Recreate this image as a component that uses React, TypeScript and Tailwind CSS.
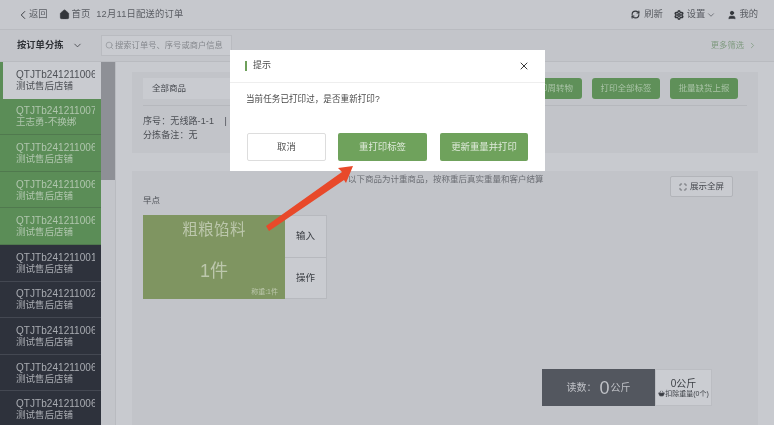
import { ChevronLeft, ChevronDown, ChevronRight, Home, RefreshCw, Settings, User, Search, X, Maximize, ShoppingBasket } from "lucide-react";

const items = [
  { id: "QTJTb241211006", name: "测试售后店铺", s: "active" },
  { id: "QTJTb241211007", name: "王志勇-不换绑", s: "green" },
  { id: "QTJTb241211006", name: "测试售后店铺", s: "green" },
  { id: "QTJTb241211006", name: "测试售后店铺", s: "green" },
  { id: "QTJTb241211006", name: "测试售后店铺", s: "green" },
  { id: "QTJTb241211001", name: "测试售后店铺", s: "dark" },
  { id: "QTJTb241211002", name: "测试售后店铺", s: "dark" },
  { id: "QTJTb241211006", name: "测试售后店铺", s: "dark" },
  { id: "QTJTb241211006", name: "测试售后店铺", s: "dark" },
  { id: "QTJTb241211006", name: "测试售后店铺", s: "dark" },
];

function SideItem({ id, name, s }: { id: string; name: string; s: string }) {
  const cls =
    s === "active"
      ? "bg-[#c9cbd0] text-[#4d5056] border-l-[3px] border-[#5b8d57] pl-[13px]"
      : s === "green"
        ? "bg-[#5b8d57] text-[#b0c6ae] border-b border-[#50794e] pl-[16px]"
        : "bg-[#2e323c] text-[#a9acb2] border-b border-[#444852] pl-[16px]";
  return (
    <div className={`h-[36.6px] shrink-0 flex flex-col justify-center overflow-hidden pr-[6px] ${cls}`}>
      <div className="text-[10px] leading-[11px] tracking-[0.05px] whitespace-nowrap overflow-hidden">{id}</div>
      <div className="text-[9.5px] leading-[11px] whitespace-nowrap">{name}</div>
    </div>
  );
}

function GreenBtn({ children, align = "justify-center" }: { children: string; align?: string }) {
  return (
    <div className={`h-[21px] w-[68px] shrink-0 rounded-[3px] bg-[#5f9059] text-[#a9c3a6] text-[8.5px] flex items-center ${align}`}>
      {children}
    </div>
  );
}

export default function App() {
  return (
    <div
      className="relative w-[774px] h-[425px] overflow-hidden bg-[#c5c7cc] text-[#44474d] flex flex-col blur-[0.35px]"
      style={{ fontFamily: '"Liberation Sans", "Noto Sans CJK SC", sans-serif' }}
    >
      {/* top bar */}
      <div className="h-[29px] shrink-0 flex items-center pl-[17px] pr-[16px] text-[9.3px] text-[#5a5d63] bg-[#c6c8cd]">
        <ChevronLeft size={14} strokeWidth={1.6} className="-ml-[1px] text-[#33363b]" />
        <span className="ml-[-1px]">返回</span>
        <Home size={11} fill="#33363b" strokeWidth={1.5} className="ml-[11px] text-[#33363b]" />
        <span className="ml-[2px]">首页</span>
        <span className="ml-[6px] tracking-[0.2px]">12月11日配送的订单</span>
        <div className="ml-auto flex items-center">
          <RefreshCw size={9} strokeWidth={3} className="text-[#33363b]" />
          <span className="ml-[4px]">刷新</span>
          <Settings size={10} strokeWidth={3.5} className="ml-[11px] text-[#33363b]" />
          <span className="ml-[3px]">设置</span>
          <ChevronDown size={10} strokeWidth={1.8} className="ml-[1px]" />
          <User size={10} fill="#33363b" className="ml-[11px] text-[#33363b]" />
          <span className="ml-[2px]">我的</span>
        </div>
      </div>

      {/* filter row */}
      <div className="h-[33px] shrink-0 flex items-center bg-[#c3c5ca] border-y border-[#b9bbc0]">
        <div className="w-[101px] flex items-center pl-[17px] font-bold text-[9.3px] text-[#2f3237]">
          按订单分拣
          <ChevronDown size={11} strokeWidth={1.6} className="ml-[8px]" />
        </div>
        <div className="h-[21px] w-[131px] flex items-center pl-[3px] bg-[#c9cbd0] border border-[#b9bbc0] text-[8.3px] text-[#85888d] whitespace-nowrap">
          <Search size={9} strokeWidth={1.6} className="shrink-0 mr-px" />
          搜索订单号、序号或商户信息
        </div>
        <div className="ml-auto mr-[17px] flex items-center text-[8.3px] text-[#7f9a7f]">
          更多筛选
          <ChevronRight size={9} strokeWidth={2} className="ml-[4px]" />
        </div>
      </div>

      <div className="flex-1 flex min-h-0">
        {/* sidebar */}
        <div className="w-[101px] shrink-0 flex flex-col overflow-hidden">
          {items.map((it, i) => (
            <SideItem key={i} {...it} />
          ))}
        </div>
        {/* scroll track */}
        <div className="w-[15px] shrink-0 bg-[#c3c5ca] border-r border-[#b9bbc0]">
          <div className="h-[118px] bg-[#8e9096]" />
        </div>

        {/* main */}
        <div className="flex-1 min-w-0 pt-[10px] pl-[16px] pr-[16px] flex flex-col gap-[18px] bg-[#c8cacf]">
          <div className="h-[81px] shrink-0 bg-[#c2c4c9] px-[11px] pt-[6px]">
            <div className="flex gap-[12px] border-b border-[#b6b8bd] pb-[6px]">
              <div className="w-[100px] h-[21px] flex items-center pl-[9px] text-[8.5px] bg-[#c9cbd0] shrink-0">全部商品</div>
              <div className="ml-auto flex gap-[10px] pr-[9px]">
                <GreenBtn align="justify-end pr-[9px]">打印周转物</GreenBtn>
                <GreenBtn>打印全部标签</GreenBtn>
                <GreenBtn>批量缺货上报</GreenBtn>
              </div>
            </div>
            <div className="mt-[8px] text-[9px] leading-[14px] text-[#4b4e54] tracking-[0.1px]">
              <div>序号：无线路-1-1&nbsp;&nbsp;&nbsp;&nbsp;|</div>
              <div>分拣备注：无</div>
            </div>
          </div>

          <div className="flex-1 bg-[#c2c4c9] px-[11px] pt-[5px] relative flex flex-col">
            <div className="flex justify-end h-[21px] pr-[14px]">
              <div className="w-[63px] h-[21px] bg-[#c9cbd0] border border-[#b2b4b9] rounded-[2px] text-[8.5px] flex items-center justify-center gap-[3px]">
                <Maximize size={8} />
                展示全屏
              </div>
            </div>
            <div className="text-[8.5px] mt-[-3px] leading-[12px] text-[#4b4e54]">早点</div>
            <div className="mt-[9px] flex h-[84px] w-[184px]">
              <div className="w-[142px] bg-[#7f9561] text-[#bcc7ac] flex flex-col items-center relative">
                <div className="text-[15.5px] leading-[18px] mt-[6px] tracking-[0.4px]">粗粮馅料</div>
                <div className="text-[18px] leading-[20px] mt-[22px]">1件</div>
                <div className="absolute right-[7px] bottom-[3px] text-[7px] leading-[9px]">称重:1件</div>
              </div>
              <div className="flex-1 flex flex-col text-[9.5px] text-[#3d4046]">
                <div className="flex-1 flex items-center justify-center bg-[#c9cbd0] border-b border-r border-t border-[#b7b9be]">输入</div>
                <div className="flex-1 flex items-center justify-center bg-[#c9cbd0] border-b border-r border-[#b7b9be]">操作</div>
              </div>
            </div>
            <div className="mt-auto mb-[19px] ml-auto mr-[35px] flex h-[37px]">
              <div className="w-[113px] bg-[#53575f] text-[#bfc1c6] text-[10px] flex items-center justify-center">
                读数：<span className="text-[18px] leading-[20px] ml-[3px] mr-px">0</span>公斤
              </div>
              <div className="w-[57px] bg-[#cbcdd2] border border-[#bbbdc2] flex flex-col items-center justify-center text-[#3d4046]">
                <div className="text-[10px] leading-[11px]">0公斤</div>
                <div className="flex items-center text-[7px] leading-[9px] whitespace-nowrap">
                  <ShoppingBasket size={7} fill="#33363b" />
                  扣除重量(0个)
                </div>
              </div>
            </div>
          </div>
        </div>
      </div>

      {/* note */}
      <div className="absolute left-[348px] top-[174px] text-[8.5px] leading-[11px] text-[#6b6e74]">
        以下商品为计重商品，按称重后真实重量和客户结算
      </div>

      {/* modal */}
      <div className="absolute left-[230px] top-[50px] w-[315px] h-[121px] bg-white flex flex-col text-[#4a4a4a]">
        <div className="h-[33px] shrink-0 flex items-center border-b border-[#eeeeee] pl-[15px] pr-[15px]">
          <div className="w-[2px] h-[10px] bg-[#6ea05b] mr-[6px]" />
          <span className="text-[9px]">提示</span>
          <X size={12} strokeWidth={1.8} className="ml-auto text-[#222]" />
        </div>
        <div className="pl-[16px] pt-[9px] text-[8.6px] leading-[14px]">当前任务已打印过，是否重新打印?</div>
        <div className="mt-auto mb-[10px] px-[17px] flex justify-between text-[9.4px]">
          <div className="w-[79px] h-[28px] flex items-center justify-center rounded-[2px] border border-[#dddddd] text-[#555]">取消</div>
          <div className="w-[89px] h-[28px] ml-[12px] flex items-center justify-center rounded-[2px] bg-[#6fa25c] text-[#dfeada]">重打印标签</div>
          <div className="w-[88px] h-[28px] ml-[13px] flex items-center justify-center rounded-[2px] bg-[#6fa25c] text-[#dfeada]">更新重量并打印</div>
        </div>
      </div>

      {/* red arrow */}
      <svg className="absolute left-[260px] top-[160px]" width="100" height="75" viewBox="0 0 100 75">
        <polygon points="93,6 78,8 82,12 6,66 9,71 84,20 86,23" fill="#e8492a" />
      </svg>
    </div>
  );
}
